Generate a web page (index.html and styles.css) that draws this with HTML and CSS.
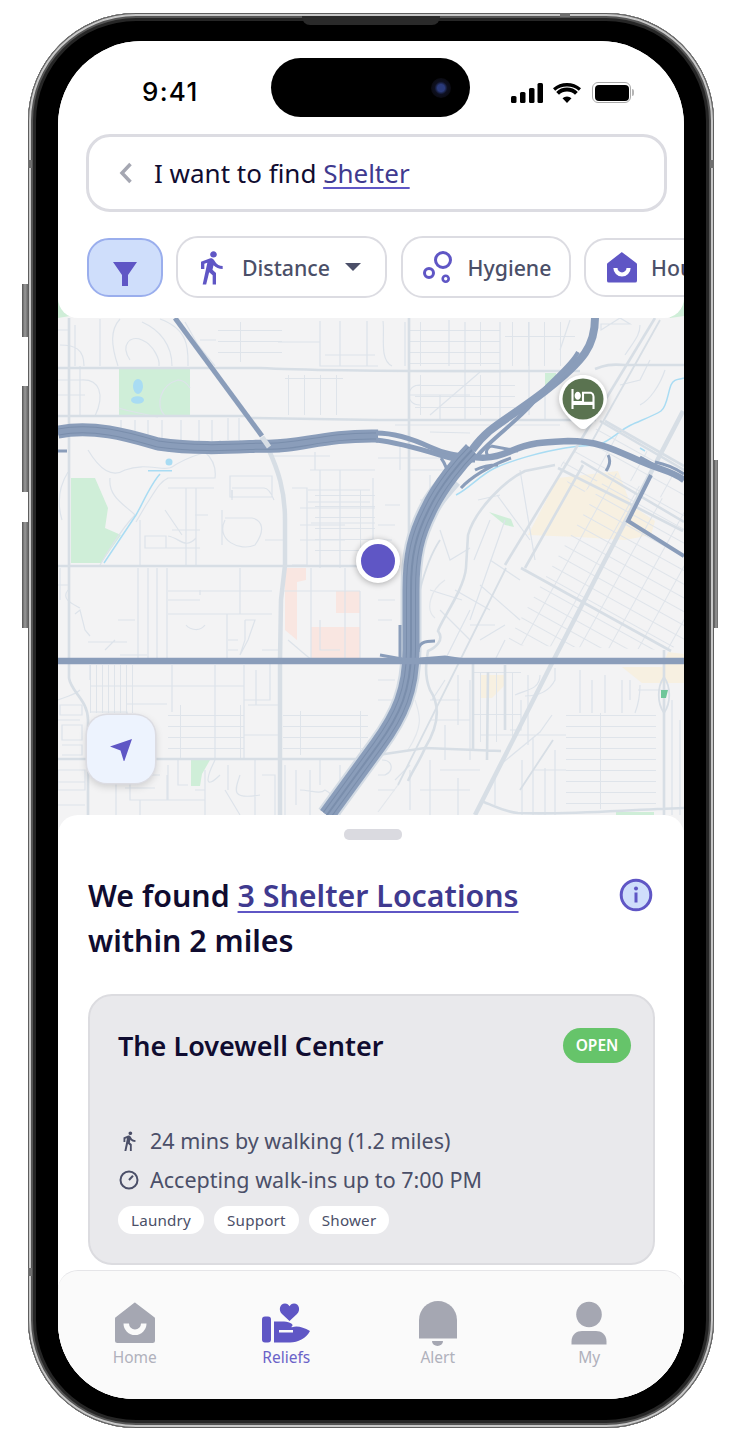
FILE: index.html
```html
<!DOCTYPE html>
<html lang="en">
<head>
<meta charset="utf-8">
<title>Reliefs</title>
<link rel="stylesheet" href="styles.css">
</head>
<body>
<div class="phone">
  <span class="side mute"></span><span class="side vol-up"></span><span class="side vol-down"></span><span class="side power"></span>
  <span class="band band-l1"></span><span class="band band-r1"></span><span class="band band-l2"></span><span class="band band-t"></span>
  <span class="speaker"></span>
  <div class="screen">
    <div class="map">
      <svg class="map-svg" viewBox="58 300 626 530" width="626" height="530">
        <defs>
          <pattern id="diag" width="26" height="12" patternUnits="userSpaceOnUse" patternTransform="rotate(29 600 560)">
            <path d="M0 .5H26M.5 0V12" class="grid-line"/>
          </pattern>
          <pattern id="diag2" width="34" height="15" patternUnits="userSpaceOnUse" patternTransform="rotate(29 560 500)">
            <path d="M0 .5H34M.5 0V15" class="grid-line"/>
          </pattern>
          <pattern id="rows" width="60" height="11" patternUnits="userSpaceOnUse">
            <path d="M0 .5H60M.5 0V11" class="grid-line"/>
          </pattern>
          <pattern id="cols" width="16" height="42" patternUnits="userSpaceOnUse">
            <path d="M.5 0V42M0 .5H16" class="grid-line"/>
          </pattern>
          <pattern id="fine" width="6" height="60" patternUnits="userSpaceOnUse">
            <path d="M.5 0V60" class="grid-line"/>
          </pattern>
        </defs>
        <rect class="land" x="58" y="300" width="626" height="530"/>
        <path class="park" d="M119 368H190V417H119Z"/>
        <path class="park" d="M71 478H95L108 508 105 528 121 535 101 563H71Z"/>
        <path class="park" d="M545 373H556V386L545 391Z"/>
        <path class="park" d="M191 760H210L202 774 200 786H191Z"/>
        <path class="park" d="M58 300H70V316L58 318Z"/>
        <path class="park" d="M665 300H684V316L670 318Z"/>
        <path class="park" d="M489 512 511 519 514 527 505 525Z"/>
        <path class="park" d="M616 812H654V822H616Z"/>
        <path class="pink" d="M285 568H306V580L297 582V640L285 630Z"/>
        <path class="pink" d="M336 591H360V613H336Z"/>
        <path class="pink" d="M311 627H360V659H311Z"/>
        <path class="sand" d="M558 478 618 471 631 505 655 521 651 535 625 540 578 537 528 535Z"/>
        <path class="sand" d="M480 675H505V685L492 698H480Z"/>
        <path class="sand" d="M622 667H662L668 652 684 654V683H642Z"/>
        <path class="water-fill" d="M133 386a5 7 0 1 1 10 0c0 5-3 8-5 8s-5-3-5-8ZM131 400a6 3.500 0 1 1 13 0a6 3.500 0 1 1-13 0Z"/>
        <circle class="water-fill" cx="169" cy="462" r="3.500"/>
        <rect class="water-fill" x="148" y="470" width="24" height="1.500"/>

        <rect class="grid-area" x="218" y="322" width="64" height="40" fill="url(#rows)"/>
        <rect class="grid-area" x="285" y="375" width="58" height="40" fill="url(#cols)"/>
        <rect class="grid-area" x="410" y="322" width="90" height="44" fill="url(#rows)"/>
        <rect class="grid-area" x="505" y="322" width="70" height="44" fill="url(#cols)"/>
        <rect class="grid-area" x="415" y="375" width="100" height="40" fill="url(#rows)"/>
        <rect class="grid-area" x="90" y="665" width="48" height="48" fill="url(#fine)"/>
        <rect class="grid-area" x="168" y="705" width="76" height="55" fill="url(#rows)"/>
        <rect class="grid-area" x="566" y="713" width="90" height="96" fill="url(#rows)"/>
        <rect class="grid-area" x="473" y="672" width="48" height="70" fill="url(#cols)"/>
        <rect class="grid-area" x="283" y="711" width="85" height="44" fill="url(#rows)"/>
        <rect class="grid-area" x="315" y="490" width="60" height="65" fill="url(#rows)"/>
        <polygon class="grid-area" points="505,645 610,470 684,510 684,640 670,650" fill="url(#diag)"/>
        <polygon class="grid-area" points="560,465 600,425 684,472 684,510 610,470 575,500" fill="url(#diag2)"/>

        <path class="minor" d="M58 330H70M75 325V366M100 319V366M60 345C75 345 84 349 84 366M120 319C110 330 111 345 118 366M130 360C120 345 130 335 142 340S160 360 159 366M142 322C160 330 172 345 172 366M160 319C190 330 188 350 188 366M200 340H216M185 322 198 345 215 366"/>
        <path class="minor" d="M58 380H80C100 378 105 395 95 416M58 395H85M80 366V416M100 416H58M119 408C130 412 150 415 158 417M165 416C155 405 160 385 178 380 185 380 188 385 190 388"/>
        <path class="minor" d="M121 420V433M135 420V436M148 420V440M162 420V445M181 420V445M199 420V443M212 420V443M239 418V440M228 418V440"/>
        <path class="minor" d="M340 321V366M367 321V366M383 321C385 335 379 360 392 366M320 321V366H378M278 342H320M325 355H375"/>
        <path class="minor" d="M68 472C60 485 56 500 62 520M88 450C100 470 112 478 125 470 145 462 165 472 172 467 190 455 200 455 205 452 214 460 216 470 215 478H168C158 483 155 492 146 505L136 522"/>
        <path class="minor" d="M110 478C108 497 125 505 135 515 120 530 100 565 100 565M230 476H272V497H230ZM232 488H264C268 488 272 495 274 500M232 490V498"/>
        <path class="minor" d="M168 488H214M186 488V565M196 488V565M165 510 182 535M140 520V565M145 536H166V548H145ZM172 530H200M166 548H200M195 515H208M168 536C180 538 185 550 196 538"/>
        <path class="minor" d="M225 520C215 540 240 552 255 545 266 530 262 520 252 518H225M265 540H285M222 510V545M232 500V490M272 456H330M218 452H280M220 440V452M240 440V452M258 443V452"/>
        <path class="minor" d="M292 488H307V565H292M300 525H345M308 490H370M308 502H370M300 508H375M311 523H375M300 540H345M340 470V568M320 470V568M373 478V568M310 470H375M315 452V470"/>
        <path class="minor" d="M378 525H395M385 505H400M378 540H392M378 458H445M400 445V470M410 470H445V500M420 500H432M430 475V490"/>
        <path class="minor" d="M60 568V600M58 585H70M68 590C60 600 75 605 80 608M75 614 80 610 85 630 90 636M88 642H127M115 640 105 650M120 655H147M138 568V661M148 568V661M157 568V661M167 568V661M118 620H135M168 591H272M168 614H272M240 568V614M227 614V661M168 600H200M200 590V595M186 625C190 630 200 632 205 625M245 620V640L240 655 248 640 255 620H245M228 640H238M228 650H238M262 650H282"/>
        <path class="minor" d="M282 591H360M311 568V660M345 568V660M360 591V660M288 640C300 650 305 655 312 660M320 620V650H340M378 600H395M378 620H392"/>
        <path class="minor" d="M90 665V680M58 700C70 695 75 695 80 690M60 705H82V715H60ZM62 725H82V740H62ZM62 745H82V755H62M58 720H80M172 665V712M215 665V760M244 665V760M90 686H244M127 704H167M90 712H127V760M256 670V705M270 660V700H244M244 735H280M248 705H280"/>
        <path class="minor" d="M58 770H85V790H58ZM58 805H85M58 782H85M95 775H160M116 770V815M130 775V800H167V775M125 788H155M140 800V815M168 765V800M178 760V785H188M195 790H205M205 770V815M165 800H205M215 760C205 780 205 790 220 775M228 765V790M255 760V815M225 790 240 815M240 775C235 790 230 800 260 795M262 775H275V815M285 765V815M296 770V805M320 760V785M340 765V790C335 800 345 805 350 800M300 790C310 790 320 795 325 790 335 795 340 810 340 815M310 770V815"/>
        <path class="minor" d="M382 760C392 760 395 770 385 775H378M378 790H395M395 780 410 765M378 680H395M378 700H392M430 700H460M458 675V725M445 725V760M430 720H470M440 770H480M420 790H470M410 770V810M430 760V815M458 778V815M470 680V760M445 680 432 700"/>
        <path class="minor" d="M528 675V745M540 675C540 690 525 690 515 695M555 668V680C550 690 540 696 525 696M521 700V730H510M580 670V713M592 680V713M605 675V713M622 680V713M640 685C640 700 635 713 635 713M638 690H668M630 680V700M680 720V815M672 700V815"/>
        <path class="minor" d="M533 738V815M522 760V815M500 765 540 732 552 715M480 735H566M495 778V805M533 770H566M545 768V815M555 750V815"/>
        <path class="minor" d="M405 322V366M449 320V366M465 322V420M500 322V420M529 322V415M545 395V420M410 395H470M440 395V420M420 385C405 385 405 405 420 405M430 432 470 433M395 425H560"/>
        <path class="minor" d="M480 372 430 415M625 355C635 340 640 335 640 325M620 385 640 380 650 360M640 405C650 400 660 385 665 370M560 350 570 320M601 330 620 318 630 324H601Z"/>
        <path class="minor" d="M474 560 490 520M497 495 530 540M505 520 470 620M480 585 520 620M478 500 500 495M520 470 535 560M440 530 450 560 470 548M430 590 462 600M470 610 445 660M455 590 490 610M490 560 520 580M440 610 470 640M480 640 505 625M505 640 495 660M470 625H495"/>
        <path class="minor light" d="M415 700C420 715 424 725 408 750M445 580C430 590 425 610 435 618M398 785 378 812"/>

        <path class="water" d="M136 515C142 505 150 485 160 474M136 515 104 563M157 448C170 452 180 452 190 451"/>
        <path class="water" d="M456 495C470 488 480 475 495 468S540 452 565 448 590 447 600 444 620 430 631 425 655 415 661 411 668 392 671 385 680 380 684 378"/>
        <path class="water" d="M640 448 645 451"/>

        <path class="arterial" d="M58 368H260C330 372 480 371 580 371M595 369C605 365 610 364 625 365H684"/>
        <path class="arterial" d="M58 416H250M251 418 378 420H596M600 421 684 470"/>
        <path class="arterial" d="M69 318V678C71 692 88 700 88 720V815"/>
        <path class="arterial" d="M409 318V568"/>
        <path class="arterial wide" d="M268 448C278 470 285 490 285 520V565L281 600 280 660V815"/>
        <path class="arterial" d="M58 566H400"/>
        <path class="arterial" d="M58 759H360"/>
        <path class="arterial" d="M655 318 505 565"/>
        <path class="arterial wide" d="M683 411 601 568 551 665 475 815"/>
        <path class="arterial" d="M605 421 684 466M581 461 684 522M558 468 638 508 683 531M583 465 525 568M521 568 671 651M555 465 525 471C505 480 475 510 468 535L466 568C464 590 440 622 438 631 445 640 435 648 428 651 425 665 426 680 430 690 438 702 442 720 425 748 420 760 412 772 408 781"/>
        <path class="arterial" d="M378 755 425 748 501 751M481 801C495 806 505 812 518 813 570 815 620 810 684 808M664 650V815M510 660 473 660V750M505 665V730M488 672 487 760"/>
        <path class="arterial thin" d="M506 568 398 785M660 320 590 445M553 740 520 790"/>
        <path class="arterial thin" d="M664 677C657 687 657 703 664 713 671 703 671 687 664 677ZM440 540C430 555 425 570 420 590"/>
        <path class="park dot" d="M661 690H668L666 698H661Z"/>

        <path class="hw ew-a" d="M58 432C95 425 130 436 158 444 200 450 235 447 263 446 300 448 320 435 378 436"/>
        <path class="hw ew-b" d="M58 432C95 425 130 436 158 444 200 450 235 447 263 446 300 448 320 435 378 436"/>
        <path class="hw ew-c" d="M58 432C95 425 130 436 158 444 200 450 235 447 263 446 300 448 320 435 378 436"/>
        <path class="hw band5" d="M376 433C395 433 415 440 430 447S455 455 472 457"/>
        <path class="hw band5" d="M376 440C395 442 420 449 440 455S460 460 475 460"/>
        <path class="hw band6" d="M468 456C478 458 490 460 511 451S545 442 568 441C600 441 615 450 640 461S670 470 684 480"/>
        <path class="hw band3" d="M58 451H67"/>
        <path class="hw band5" d="M175 318 262 436"/>
        <path class="hw band3" d="M441 458C450 470 450 485 441 498M458 461 452 478M491 446 518 451M491 446C484 450 486 456 491 458M475 470C483 466 490 465 498 465M461 488C470 478 490 465 511 458M608 455C611 460 610 465 606 471M640 457 664 470M655 462C665 464 675 468 684 474"/>
        <path class="hw band8" d="M595 318C595 345 585 360 545 391S490 425 472 450"/>
        <path class="hw band4" d="M578 352C570 368 545 385 535 400S490 440 478 455"/>
        <path class="shoulder" d="M452 478C440 492 434 498 428 511 416 535 411 555 411 590V650C411 690 400 715 378 745L327 815"/>
        <path class="hw lane-a" d="M472 450C462 460 440 485 428 511 416 535 411 555 411 590V650C411 690 400 715 378 745L327 815"/>
        <path class="hw lane-b" d="M472 450C462 460 440 485 428 511 416 535 411 555 411 590V650C411 690 400 715 378 745L327 815"/>
        <path class="hw lane-c" d="M472 450C462 460 440 485 428 511 416 535 411 555 411 590V650C411 690 400 715 378 745L327 815"/>
        <path class="hw lane-d" d="M472 450C462 460 440 485 428 511 416 535 411 555 411 590V650C411 690 400 715 378 745L327 815"/>
        <path class="hw band4" d="M651 475 628 521 684 556"/>
        <path class="hw band3" d="M400 625V660M418 652C418 643 424 641 435 641"/>
        <path class="hw artery" d="M58 661H684"/>
        <path class="hw band3" d="M380 655 402 659M420 659 445 657 465 660"/>
        <path class="rampcut" d="M262 437 269 447"/>
      </svg>
    </div>

    <header class="top">
      <div class="status">
        <span class="time">9:41</span>
        <div class="island"><span class="camera"></span></div>
        <div class="status-icons">
          <svg class="signal" width="32" height="20" viewBox="0 0 32 20"><rect x="0" y="13" width="5.500" height="7" rx="1.500"/><rect x="9" y="9" width="5.500" height="11" rx="1.500"/><rect x="18" y="5" width="5.500" height="15" rx="1.500"/><rect x="26.500" y="0" width="5.500" height="20" rx="1.500"/></svg>
          <svg class="wifi" width="28" height="20" viewBox="0 0 28 20"><path d="M14 20 9.500 15.300a6.500 6.500 0 0 1 9 0ZM14 8.500a11.500 11.500 0 0 0-8 3.300L3.200 9A15.500 15.500 0 0 1 24.800 9L22 11.800a11.500 11.500 0 0 0-8-3.300ZM14 0A22 22 0 0 0 0 5.200l2.200 2.500A18.500 18.500 0 0 1 14 3.500a18.500 18.500 0 0 1 11.800 4.200L28 5.200A22 22 0 0 0 14 0Z"/></svg>
          <span class="battery"><span class="battery-fill"></span></span>
        </div>
      </div>
      <div class="search">
        <svg class="back" width="14" height="22" viewBox="0 0 14 22"><path d="M11.500 2 3 11l8.500 9"/></svg>
        <span class="search-text">I want to find <a class="link">Shelter</a></span>
      </div>
      <div class="chips">
        <button class="chip filter">
          <svg width="26" height="26" viewBox="0 0 26 26"><path d="M1 1H25L16 14V25H10V14Z"/></svg>
        </button>
        <button class="chip tall distance">
          <svg class="ic-walk" width="40" height="37" viewBox="0 0 24 24" preserveAspectRatio="none"><path d="M13.500 5.500c1.100 0 2-.9 2-2s-.9-2-2-2-2 .9-2 2 .9 2 2 2zM9.800 8.900 7 23h2.100l1.800-8 2.100 2v6h2v-7.500l-2.100-2 .6-3C14.800 12 16.800 13 19 13v-2c-1.900 0-3.500-1-4.300-2.400l-1-1.600c-.4-.6-1-1-1.700-1-.3 0-.5.1-.8.1L6 8.300V13h2V9.600l1.800-.7"/></svg>
          <span>Distance</span>
          <i class="caret"></i>
        </button>
        <button class="chip tall hygiene">
          <svg class="ic-hyg" width="30" height="34" viewBox="0 0 30 34"><circle cx="20" cy="10" r="7.500"/><circle cx="6" cy="23" r="4.500"/><circle class="tiny" cx="22.700" cy="28.700" r="3"/></svg>
          <span>Hygiene</span>
        </button>
        <button class="chip housing">
          <svg class="ic-home" width="30" height="31" viewBox="0 0 40 41"><path d="M20 0 39 14.500a2 2 0 0 1 1 1.500V38a2.500 2.500 0 0 1-2.500 2.500H2.500A2.500 2.500 0 0 1 0 38V16a2 2 0 0 1 1-1.500L19 .5a1 1 0 0 1 1-.5Z"/><path class="smile" d="M8.500 21H14a6 6 0 0 0 12 0h5.500a11.500 11.500 0 0 1-23 0Z"/></svg>
          <span>Housing</span>
        </button>
      </div>
    </header>

    <div class="map-zone">
      <span class="pin">
        <svg width="50" height="56" viewBox="0 0 50 56">
          <path class="pin-body" d="M25 1C38.300 1 49 11.700 49 25 49 35 38 46 29 53.500 26.500 55.500 23.500 55.500 21 53.500 12 46 1 35 1 25 1 11.700 11.700 1 25 1Z"/>
          <circle class="pin-disc" cx="25" cy="25" r="20.500"/>
          <g transform="translate(12.400 8.400) scale(1.050 1.330)">
            <path class="pin-bed" d="M7 13c1.660 0 3-1.340 3-3S8.660 7 7 7s-3 1.340-3 3 1.340 3 3 3zm12-6h-8v7H3V5H1v15h2v-3h18v3h2v-9c0-2.210-1.790-4-4-4zm2 7.500h-8V8.500h6c1.100 0 2 .9 2 2z"/>
          </g>
        </svg>
      </span>
      <span class="me"></span>
      <button class="locate">
        <svg width="24" height="24" viewBox="0 0 24 24"><path d="M23 2 1 9.500 11.500 13.500 15 25Z"/></svg>
      </button>
    </div>

    <section class="sheet">
      <span class="handle"></span>
      <div class="sheet-head">
        <h1 class="heading">We found <a class="link">3 Shelter Locations</a><br>within 2 miles</h1>
        <svg class="info" width="34" height="34" viewBox="0 0 34 34"><circle cx="17" cy="17" r="14.800"/><rect x="15.500" y="14.500" width="3" height="10"/><circle class="dot" cx="17" cy="10.500" r="2"/></svg>
      </div>
      <article class="card">
        <div class="card-head">
          <h2 class="card-title">The Lovewell Center</h2>
          <span class="badge">OPEN</span>
        </div>
        <p class="meta">
          <svg class="ic-small" width="22" height="22" viewBox="0 0 24 24"><path d="M13.500 5.500c1.100 0 2-.9 2-2s-.9-2-2-2-2 .9-2 2 .9 2 2 2zM9.800 8.900 7 23h2.100l1.800-8 2.100 2v6h2v-7.500l-2.100-2 .6-3C14.800 12 16.800 13 19 13v-2c-1.900 0-3.500-1-4.300-2.400l-1-1.600c-.4-.6-1-1-1.700-1-.3 0-.5.1-.8.1L6 8.300V13h2V9.600l1.800-.7"/></svg>
          24 mins by walking (1.2 miles)
        </p>
        <p class="meta">
          <svg class="ic-clock" width="22" height="22" viewBox="0 0 22 22"><circle cx="11" cy="11" r="8.500"/><path d="M11 11 15 6.800"/></svg>
          Accepting walk-ins up to 7:00 PM
        </p>
        <div class="tags"><span class="tag">Laundry</span><span class="tag">Support</span><span class="tag">Shower</span></div>
      </article>
    </section>

    <nav class="tabs">
      <a class="tab">
        <svg class="ic-home grey" width="40" height="41" viewBox="0 0 40 41"><path d="M20 0 39 14.500a2 2 0 0 1 1 1.500V38a2.500 2.500 0 0 1-2.500 2.500H2.500A2.500 2.500 0 0 1 0 38V16a2 2 0 0 1 1-1.500L19 .5a1 1 0 0 1 1-.5Z"/><path class="smile" d="M8.500 21H14a6 6 0 0 0 12 0h5.500a11.500 11.500 0 0 1-23 0Z"/></svg>
        <span>Home</span>
      </a>
      <a class="tab active">
        <svg width="48" height="41" viewBox="0 0 48 41"><path d="M27.500 18.500 20 11.500C16 7.500 18 1 23 1c2.200 0 3.600 1.200 4.500 2.700C28.400 2.200 29.800 1 32 1c5 0 7 6.500 3 10.500Z"/><rect x="0" y="14" width="9" height="26" rx="3"/><path d="M12 19h10c3 0 6 1 8 2.500 1 1.200.5 2.500-1 3l1 .2C35 23 41 24.500 48 28.500 44 36 36 40 28 40H12Zm5 8.500v2.500h14v-2.500Z" fill-rule="evenodd"/></svg>
        <span>Reliefs</span>
      </a>
      <a class="tab">
        <svg class="grey" width="40" height="46" viewBox="0 0 40 46"><path d="M1 38.500V20a19 19 0 0 1 38 0v18.500Z"/><path d="M14 41h11a5.500 5 0 0 1-11 0Z"/></svg>
        <span class="alert-label">Alert</span>
      </a>
      <a class="tab">
        <svg class="grey" width="36" height="43" viewBox="0 0 36 43"><circle cx="18" cy="13" r="12.800"/><path d="M.5 43v-3C.5 32.500 6 29.500 11 29.500h14c5 0 10.500 3 10.500 10.500v3Z"/></svg>
        <span>My</span>
      </a>
    </nav>
  </div>
</div>
</body>
</html>
```

FILE: styles.css
```css
* { box-sizing: border-box; }
html, body { margin: 0; padding: 0; background: #fff; }
body {
  width: 740px;
  height: 1442px;
  overflow: hidden;
  font-family: "Noto Sans", sans-serif;
  padding: 13px 26px 14px 28px;
}
.phone {
  position: relative;
  width: 686px;
  height: 1415px;
  padding: 28px 30px 29px 30px;
  background: #000;
  border-radius: 108px;
  box-shadow:
    inset 0 0 0 1px #5e5e5e,
    inset 0 0 0 3px #c8c8c8,
    inset 0 0 0 5px #555,
    inset 0 0 0 8px #262626;
}
.side { position: absolute; background: linear-gradient(90deg, #555, #999 50%, #666); }
.mute { left: -6px; top: 271px; width: 6px; height: 53px; }
.vol-up { left: -6px; top: 373px; width: 6px; height: 106px; }
.vol-down { left: -6px; top: 509px; width: 6px; height: 106px; }
.power { right: -4px; top: 447px; width: 4px; height: 168px; }
.band { position: absolute; background: #6f6f6f; }
.band-l1 { left: 0; top: 147px; width: 4px; height: 8px; }
.band-r1 { right: 0; top: 147px; width: 4px; height: 8px; }
.band-l2 { left: 0; top: 1255px; width: 4px; height: 8px; }
.band-t { left: 532px; top: 0; width: 10px; height: 4px; }
.speaker {
  position: absolute;
  left: 274px;
  top: 3px;
  width: 138px;
  height: 9px;
  background: #2a2a2a;
  border-radius: 0 0 8px 8px;
}
.screen {
  position: relative;
  width: 626px;
  height: 1358px;
  background: #fff;
  border-radius: 84px 84px 76px 76px;
  overflow: hidden;
  display: flex;
  flex-direction: column;
}

/* map canvas */
.map { position: absolute; left: 0; top: 259px; width: 626px; height: 530px; }
.map-svg { display: block; }
.land { fill: #f3f3f4; }
.park { fill: #cfeed8; }
.pink { fill: #f9e6e1; }
.sand { fill: #f7f0e1; }
.water-fill { fill: #a9dcf3; }
.grid-line { stroke: #dfe4ea; stroke-width: 1; fill: none; }
.minor { fill: none; stroke: #dde3ea; stroke-width: 1.200; }
.minor.light { stroke: #e3e7ec; }
.water { fill: none; stroke: #a9dcf3; stroke-width: 1.500; }
.arterial { fill: none; stroke: #d7dee5; stroke-width: 2.600; }
.arterial.wide { stroke-width: 4.500; }
.arterial.thin { stroke-width: 1.800; }
.hw { fill: none; stroke: #8a9dba; }
.ew-a { stroke-width: 13; }
.ew-b { stroke-width: 7; stroke: #7a8eac; }
.ew-c { stroke-width: 5; }
.band3 { stroke-width: 3; }
.band4 { stroke-width: 4; }
.band5 { stroke-width: 5; }
.band6 { stroke-width: 6.500; }
.band8 { stroke-width: 8; }
.shoulder { fill: none; stroke: #d3dbe4; stroke-width: 21; }
.lane-a { stroke-width: 17; }
.lane-b { stroke-width: 10; stroke: #7a8eac; }
.lane-c { stroke-width: 8; }
.lane-d { stroke-width: 2; stroke: #7a8eac; }
.artery { stroke-width: 6.500; }
.rampcut { stroke: #d7dee5; stroke-width: 5; fill: none; }
.dot { fill: #6fc69a; }

/* top panel */
.top {
  position: relative;
  height: 277px;
  flex: none;
  background: #fff;
  border-radius: 0 0 20px 20px;
  padding: 17px 0 0 28px;
  overflow: hidden;
}
.status {
  height: 59px;
  display: flex;
  align-items: center;
  position: relative;
}
.time {
  margin-left: 56px;
  width: 129px;
  font: 500 26px/1 Inter, sans-serif;
  letter-spacing: 1.300px;
  color: #000;
  margin-top: 9px;
}
.island {
  width: 199px;
  height: 59px;
  background: #000;
  border-radius: 30px;
  position: relative;
}
.camera {
  position: absolute;
  left: 160px;
  top: 20px;
  width: 20px;
  height: 20px;
  border-radius: 50%;
  background: radial-gradient(circle, #2a3a7a 0 25%, #0e1020 45%, #0a0a10 75%, #000 100%);
}
.status-icons {
  margin-left: 41px;
  display: flex;
  align-items: center;
  gap: 11px;
  margin-top: 10px;
}
.signal, .wifi { fill: #000; display: block; }
.signal { margin-right: -1px; }
.battery {
  width: 39px;
  height: 21px;
  border: 1.500px solid #a8a8a8;
  border-radius: 6px;
  padding: 1.500px;
  display: block;
  position: relative;
}
.battery::after {
  content: "";
  position: absolute;
  right: -4px;
  top: 5.500px;
  width: 2px;
  height: 7px;
  background: #b5b5b5;
  border-radius: 0 2px 2px 0;
}
.battery-fill { display: block; height: 100%; background: #000; border-radius: 4px; }
.search {
  margin-top: 17px;
  width: 581px;
  height: 78px;
  border: 3px solid #dcdce2;
  border-radius: 24px;
  display: flex;
  align-items: center;
  padding: 0 0 0 30px;
}
.back { fill: none; stroke: #a5a7b2; stroke-width: 3.500; margin-right: 21px; flex: none; }
.search-text { font-size: 26px; line-height: 36px; color: #100c30; }
.link {
  color: #3f3a8f;
  text-decoration: underline;
  text-decoration-thickness: 1.500px;
  text-underline-offset: 4px;
  text-decoration-color: #5f56c5;
}
.chips {
  margin-top: 24px;
  display: flex;
  align-items: center;
  gap: 13px;
  width: 640px;
}
.chip {
  flex: none;
  height: 59px;
  background: #fff;
  border: 2.500px solid #dcdce2;
  border-radius: 22px;
  display: flex;
  align-items: center;
  font: 500 21.300px/1 "Noto Sans", sans-serif;
  color: #4b4f68;
  padding: 0;
}
.chip span { padding-top: 1px; }
.chip.tall { height: 62px; }
.filter {
  width: 76px;
  background: #cfdefb;
  border-color: #9aaeed;
  justify-content: center;
  padding-top: 14px;
  margin-left: 1px;
}
.filter svg { fill: #5f56c5; display: block; }
.distance { width: 211px; padding-left: 13px; }
.distance span { margin-left: 11px; }
.caret {
  margin-left: 15px;
  width: 0;
  height: 0;
  border-left: 8px solid transparent;
  border-right: 8px solid transparent;
  border-top: 8px solid #4b4f68;
}
.ic-walk { fill: #5f56c5; flex: none; }
.hygiene { width: 170px; padding-left: 19.500px; margin-left: 1px; }
.hygiene span { margin-left: 15px; }
.ic-hyg { fill: none; stroke: #5f56c5; stroke-width: 3; flex: none; }
.ic-hyg .tiny { stroke-width: 2.600; }
.housing { width: 200px; padding-left: 21px; }
.housing span { margin-left: 14px; }
.ic-home { fill: #5f56c5; flex: none; }
.ic-home.grey { fill: #a5a7b2; }
.ic-home .smile { fill: #fff; }
.tabs .ic-home .smile { fill: #fafafa; }

/* map overlays */
.map-zone { position: relative; flex: none; height: 497px; }
.pin {
  position: absolute;
  left: 500px;
  top: 56px;
  width: 50px;
  height: 56px;
  filter: drop-shadow(0 2px 3px rgba(0,0,0,.25));
}
.pin svg { display: block; }
.pin-body { fill: #fff; }
.pin-disc { fill: #5a7350; }
.pin-bed { fill: #fff; fill-rule: evenodd; }
.me {
  position: absolute;
  left: 298px;
  top: 221px;
  width: 44px;
  height: 44px;
  background: #5f56c5;
  border: 5px solid #fff;
  border-radius: 50%;
  box-shadow: 0 1px 6px rgba(0,0,0,.3);
}
.locate {
  position: absolute;
  left: 29px;
  top: 397px;
  width: 68px;
  height: 68px;
  border: 0;
  padding: 0;
  background: #edf3fe;
  border-radius: 20px;
  box-shadow: 0 0 0 1.500px #dcdce2, 0 3px 8px rgba(0,0,0,.18);
  display: flex;
  align-items: center;
  justify-content: center;
}
.locate svg { fill: #5f56c5; display: block; }

/* sheet */
.sheet {
  position: relative;
  flex: 1;
  min-height: 0;
  background: #fff;
  border-radius: 20px 20px 0 0;
  padding: 14px 30px 0;
  overflow: hidden;
  display: flex;
  flex-direction: column;
}
.handle {
  align-self: center;
  width: 58px;
  height: 11px;
  background: #dadae0;
  border-radius: 5px;
  flex: none;
  margin-left: 4px;
}
.sheet-head {
  display: flex;
  justify-content: space-between;
  align-items: flex-start;
  margin-top: 33px;
}
.heading {
  margin: 0;
  font-size: 30.350px;
  font-weight: 600;
  line-height: 45px;
  color: #100c30;
}
.info { fill: #cfdefb; stroke: none; margin: 5px 1px 0 0; flex: none; }
.info circle:first-child { stroke: #5f56c5; stroke-width: 3; }
.info rect { fill: #5f56c5; }
.info .dot { fill: #5f56c5; stroke: none; }
.card {
  margin-top: 31px;
  width: 567px;
  height: 271px;
  flex: none;
  background: #e9e9ec;
  border: 2px solid #dcdce0;
  border-radius: 24px;
  padding: 31px 22px 0 28px;
}
.card-head { display: flex; justify-content: space-between; align-items: flex-start; height: 94px; }
.card-title { margin: 0; font-size: 27px; font-weight: 600; line-height: 38px; color: #100c30; }
.badge {
  width: 68px;
  height: 35px;
  border-radius: 18px;
  background: #66c46a;
  color: #fff;
  font-size: 15.500px;
  font-weight: 600;
  line-height: 35px;
  text-align: center;
  margin-top: 1px;
}
.meta {
  margin: 0;
  height: 39px;
  display: flex;
  align-items: center;
  gap: 10px;
  font-size: 21.500px;
  color: #4b4f68;
  white-space: nowrap;
}
.ic-small { fill: #4b4f68; flex: none; }
.ic-clock { fill: none; stroke: #4b4f68; stroke-width: 2; flex: none; }
.tags { display: flex; gap: 10px; margin-top: 7px; }
.tag {
  height: 28px;
  padding: 0 13px;
  background: #fff;
  border-radius: 14px;
  font-size: 15.200px;
  line-height: 28px;
  color: #4b4f68;
  letter-spacing: .2px;
}

/* tab bar */
.tabs {
  position: absolute;
  left: 0;
  right: 0;
  bottom: 0;
  height: 129px;
  background: #fafafa;
  border-top: 1px solid #e5e5e8;
  border-radius: 20px 20px 0 0;
  padding: 29px 19px 0 1px;
  display: grid;
  grid-template-columns: repeat(4, 1fr);
}
.tab {
  display: flex;
  flex-direction: column;
  align-items: center;
  font-size: 15.500px;
  line-height: 22px;
  color: #b0b1bc;
  height: 70px;
  position: relative;
}
.tab svg { display: block; height: 46px; }
.tab.active { color: #6a62c8; }
.tab.active svg { fill: #5f56c5; }
.tab svg.grey { fill: #a5a7b2; }
.tab span { position: absolute; top: 46px; }
```
